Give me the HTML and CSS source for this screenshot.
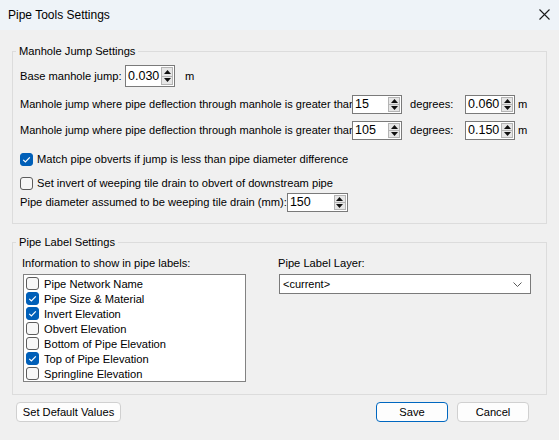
FILE: index.html
```html
<!DOCTYPE html>
<html>
<head>
<meta charset="utf-8">
<title>Pipe Tools Settings</title>
<link rel="stylesheet" href="styles.css">
</head>
<body>
<div class="window">
  <div class="titlebar">
    <span class="title">Pipe Tools Settings</span>
    <svg class="close" width="11" height="11" viewBox="0 0 11 11"><path d="M0.5 0.5L10.5 10.5M10.5 0.5L0.5 10.5" stroke="#1a1a1a" stroke-width="1.1" fill="none"/></svg>
  </div>
  <div class="content">
    <fieldset class="group g1">
      <legend>Manhole Jump Settings</legend>
      <div class="row r1">
        <span class="lbl lbl-base">Base manhole jump:</span>
        <div class="spin spin-tall w50"><span class="val">0.030</span><span class="arrows"><span class="ab"><svg width="7" height="4" viewBox="0 0 7 4"><path d="M0 4L3.5 0L7 4Z"/></svg></span><span class="ab"><svg width="7" height="4" viewBox="0 0 7 4"><path d="M0 0L3.5 4L7 0Z"/></svg></span></span></div>
        <span class="unit">m</span>
      </div>
      <div class="row r2">
        <span class="lbl lbl-long">Manhole jump where pipe deflection through manhole is greater than</span>
        <div class="spin w50"><span class="val">15</span><span class="arrows"><span class="ab"><svg width="7" height="4" viewBox="0 0 7 4"><path d="M0 4L3.5 0L7 4Z"/></svg></span><span class="ab"><svg width="7" height="4" viewBox="0 0 7 4"><path d="M0 0L3.5 4L7 0Z"/></svg></span></span></div>
        <span class="deg">degrees:</span>
        <div class="spin w50"><span class="val">0.060</span><span class="arrows"><span class="ab"><svg width="7" height="4" viewBox="0 0 7 4"><path d="M0 4L3.5 0L7 4Z"/></svg></span><span class="ab"><svg width="7" height="4" viewBox="0 0 7 4"><path d="M0 0L3.5 4L7 0Z"/></svg></span></span></div>
        <span class="unit2">m</span>
      </div>
      <div class="row r3">
        <span class="lbl lbl-long">Manhole jump where pipe deflection through manhole is greater than</span>
        <div class="spin w50"><span class="val">105</span><span class="arrows"><span class="ab"><svg width="7" height="4" viewBox="0 0 7 4"><path d="M0 4L3.5 0L7 4Z"/></svg></span><span class="ab"><svg width="7" height="4" viewBox="0 0 7 4"><path d="M0 0L3.5 4L7 0Z"/></svg></span></span></div>
        <span class="deg">degrees:</span>
        <div class="spin w50"><span class="val">0.150</span><span class="arrows"><span class="ab"><svg width="7" height="4" viewBox="0 0 7 4"><path d="M0 4L3.5 0L7 4Z"/></svg></span><span class="ab"><svg width="7" height="4" viewBox="0 0 7 4"><path d="M0 0L3.5 4L7 0Z"/></svg></span></span></div>
        <span class="unit2">m</span>
      </div>
      <div class="check c1">
        <span class="cb on"><svg width="13" height="13" viewBox="0 0 13 13"><path d="M3.2 6.8L5.4 9L9.8 4.4" stroke="#fff" stroke-width="1.2" fill="none"/></svg></span>
        <span>Match pipe obverts if jump is less than pipe diameter difference</span>
      </div>
      <div class="check c2">
        <span class="cb"></span>
        <span>Set invert of weeping tile drain to obvert of downstream pipe</span>
      </div>
      <div class="row r4">
        <span class="lbl-diam">Pipe diameter assumed to be weeping tile drain (mm):</span>
        <div class="spin w61"><span class="val">150</span><span class="arrows"><span class="ab"><svg width="7" height="4" viewBox="0 0 7 4"><path d="M0 4L3.5 0L7 4Z"/></svg></span><span class="ab"><svg width="7" height="4" viewBox="0 0 7 4"><path d="M0 0L3.5 4L7 0Z"/></svg></span></span></div>
      </div>
    </fieldset>

    <fieldset class="group g2">
      <legend>Pipe Label Settings</legend>
      <div class="cols">
        <div class="col-left">
          <div class="cap">Information to show in pipe labels:</div>
          <div class="listbox">
            <div class="item"><span class="cb"></span><span>Pipe Network Name</span></div>
            <div class="item"><span class="cb on"><svg width="13" height="13" viewBox="0 0 13 13"><path d="M3.2 6.8L5.4 9L9.8 4.4" stroke="#fff" stroke-width="1.2" fill="none"/></svg></span><span>Pipe Size &amp; Material</span></div>
            <div class="item"><span class="cb on"><svg width="13" height="13" viewBox="0 0 13 13"><path d="M3.2 6.8L5.4 9L9.8 4.4" stroke="#fff" stroke-width="1.2" fill="none"/></svg></span><span>Invert Elevation</span></div>
            <div class="item"><span class="cb"></span><span>Obvert Elevation</span></div>
            <div class="item"><span class="cb"></span><span>Bottom of Pipe Elevation</span></div>
            <div class="item"><span class="cb on"><svg width="13" height="13" viewBox="0 0 13 13"><path d="M3.2 6.8L5.4 9L9.8 4.4" stroke="#fff" stroke-width="1.2" fill="none"/></svg></span><span>Top of Pipe Elevation</span></div>
            <div class="item"><span class="cb"></span><span>Springline Elevation</span></div>
          </div>
        </div>
        <div class="col-right">
          <div class="cap">Pipe Label Layer:</div>
          <div class="combo">
            <span class="combo-val">&lt;current&gt;</span>
            <svg class="chev" width="9" height="5" viewBox="0 0 9 5"><path d="M0.5 0.5L4.5 4.5L8.5 0.5" stroke="#5a5a5a" stroke-width="1" fill="none"/></svg>
          </div>
        </div>
      </div>
    </fieldset>

    <div class="buttons">
      <button class="btn btn-default">Set Default Values</button>
      <div class="spacer"></div>
      <button class="btn btn-primary">Save</button>
      <button class="btn">Cancel</button>
    </div>
  </div>
</div>
</body>
</html>
```

FILE: styles.css
```css
html, body {
  margin: 0;
  padding: 0;
}
body {
  background: #f0f0f0;
  font-family: "Liberation Sans", Arial, sans-serif;
  font-size: 11.15px;
  color: #000;
}
.window {
  width: 559px;
  height: 440px;
  overflow: hidden;
  background: #f0f0f0;
}
.titlebar {
  height: 30px;
  background: #eef3f8;
  display: flex;
  align-items: center;
  justify-content: space-between;
  padding: 0 9px 0 8px;
  box-sizing: border-box;
}
.title {
  font-size: 12px;
}
.close {
  display: block;
  margin-top: -2px;
}
.content {
  padding: 14px 12px 0;
}
fieldset.group {
  margin: 0;
  padding: 7px 7px 11px;
  border: 1px solid #dcdcdc;
  min-width: 0;
}
fieldset.g2 {
  margin-top: 11px;
  padding-top: 7px;
  padding-bottom: 12px;
}
legend {
  padding: 0 3px;
  margin-left: -4px;
  line-height: 14px;
}
.row {
  display: flex;
  align-items: center;
}
.r1 { height: 22px; }
.r2 { height: 20px; margin-top: 7px; }
.r3 { height: 20px; margin-top: 6px; }
.r4 { height: 20px; margin-top: 1px; }
.lbl {
  white-space: nowrap;
  overflow: hidden;
  flex: none;
}
.lbl-base { width: 105px; }
.lbl-long { width: 332px; font-size: 11px; }
.lbl-diam { white-space: nowrap; flex: none; }
.unit { margin-left: 10px; }
.deg { width: 55px; margin-left: 8px; flex: none; }
.unit2 { margin-left: 3px; }

.spin {
  box-sizing: border-box;
  height: 19px;
  border: 1px solid #7a7a7a;
  background: #fff;
  display: flex;
  flex: none;
}
.spin-tall { height: 22px; }
.w50 { width: 50px; }
.w61 { width: 61px; }
.val {
  flex: 1;
  padding-left: 2px;
  display: flex;
  align-items: center;
  font-size: 12.5px;
}
.arrows {
  width: 12px;
  display: flex;
  flex-direction: column;
  margin: 1px 1px 1px 0;
}
.ab {
  flex: 1;
  display: flex;
  align-items: center;
  justify-content: center;
  background: #e6e6e6;
  border: 1px solid #b4b4b4;
}
.ab + .ab { border-top: none; }
.ab svg { display: block; fill: #111; }

.check {
  display: flex;
  align-items: center;
  height: 16px;
}
.c1 { margin-top: 11px; }
.c2 { margin-top: 8px; }
.cb {
  box-sizing: border-box;
  width: 13px;
  height: 13px;
  border: 1px solid #5c5c5c;
  border-radius: 3px;
  background: #f7f7f7;
  margin-right: 4px;
  flex: none;
  display: block;
}
.cb.on {
  background: #005fb8;
  border-color: #005fb8;
}
.cb.on svg {
  display: block;
  margin: -1px;
}

.cols {
  display: grid;
  grid-template-columns: 226px 252px;
  column-gap: 32px;
}
.col-left { padding-left: 2px; }
.cap {
  line-height: 14px;
  height: 14px;
  margin-bottom: 4px;
}
.listbox {
  box-sizing: border-box;
  margin-left: 1px;
  width: 223px;
  height: 108px;
  border: 1px solid #828282;
  background: #fff;
  padding: 1px 0 0 2px;
}
.item {
  display: flex;
  align-items: center;
  height: 15px;
}
.item .cb { margin-right: 5px; }

.combo {
  box-sizing: border-box;
  width: 252px;
  height: 20px;
  border: 1px solid #7a7a7a;
  background: #fff;
  display: flex;
  align-items: center;
  justify-content: space-between;
  padding: 0 8px 0 3px;
  margin-left: 1px;
}
.combo-val { font-size: 11px; }
.chev { display: block; }

.buttons {
  display: flex;
  margin-top: 7px;
  padding: 0 18px 0 4px;
}
.spacer { flex: 1; }
.btn {
  box-sizing: border-box;
  height: 20px;
  width: 72px;
  font-family: "Liberation Sans", Arial, sans-serif;
  font-size: 11.15px;
  color: #000;
  background: #fdfdfd;
  border: 1px solid #d0d0d0;
  border-radius: 4px;
  padding: 0;
}
.btn-default { width: 105px; }
.btn-primary {
  border-color: #0067c0;
  margin-right: 9px;
}
```
